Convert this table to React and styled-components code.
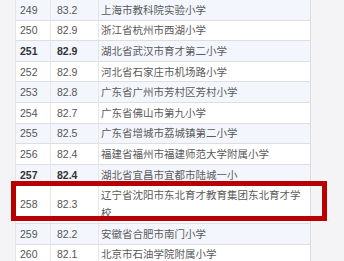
import styled, { createGlobalStyle } from 'styled-components'

const rows = [
  { rank: 249, score: '83.2', name: '上海市教科院实验小学' },
  { rank: 250, score: '82.9', name: '浙江省杭州市西湖小学' },
  { rank: 251, score: '82.9', name: '湖北省武汉市育才第二小学', bold: true },
  { rank: 252, score: '82.9', name: '河北省石家庄市机场路小学' },
  { rank: 253, score: '82.8', name: '广东省广州市芳村区芳村小学' },
  { rank: 254, score: '82.7', name: '广东省佛山市第九小学' },
  { rank: 255, score: '82.5', name: '广东省增城市荔城镇第二小学' },
  { rank: 256, score: '82.4', name: '福建省福州市福建师范大学附属小学' },
  { rank: 257, score: '82.4', name: '湖北省宜昌市宜都市陆城一小', bold: true },
  { rank: 258, score: '82.3', name: '辽宁省沈阳市东北育才教育集团东北育才学校' },
  { rank: 259, score: '82.2', name: '安徽省合肥市南门小学' },
  { rank: 260, score: '82.1', name: '北京市石油学院附属小学' },
]

function App() {
  return (
    <>
      <GlobalStyle />
      <Page>
        <Wrap>
          <Table>
            <colgroup>
              <col style={{ width: 35 }} />
              <col style={{ width: 48 }} />
              <col />
            </colgroup>
            <tbody>
              {rows.map((row) => (
                <Row key={row.rank} $odd={row.rank % 2 === 1}>
                  <Cell $pad={4} $bold={row.bold}>{row.rank}</Cell>
                  <Cell $pad={6} $bold={row.bold}>{row.score}</Cell>
                  <Cell $pad={2} $name>{row.name}</Cell>
                </Row>
              ))}
            </tbody>
          </Table>
          <Highlight />
        </Wrap>
      </Page>
    </>
  )
}

export default App

const GlobalStyle = createGlobalStyle`
  html, body {
    margin: 0;
    padding: 0;
    background: #f4f4f7;
  }
`

const Page = styled.div`
  width: 344px;
  height: 261px;
  overflow: hidden;
  background: #f4f4f7;
  padding-left: 15px;
  box-sizing: border-box;
`

const Wrap = styled.div`
  position: relative;
  width: 296px;
  margin-top: -1px;
`

const Table = styled.table`
  width: 296px;
  table-layout: fixed;
  border-collapse: collapse;
  border-right: 1px solid #dcdcdc;
  border-left: 1px solid #e4e4e4;
  font-family: Arial, 'Liberation Sans', 'Noto Sans CJK SC', sans-serif;
  font-size: 10.5px;
  color: #555555;
`

const Row = styled.tr`
  background: ${(p) => (p.$odd ? '#f3f7fd' : '#ffffff')};
  border-top: 1px solid #dedede;
`

const Cell = styled.td`
  padding: 0.8px 2px 0.8px ${(p) => p.$pad}px;
  line-height: 18px;
  vertical-align: middle;
  border-left: 1px solid #e6e6e6;
  font-weight: ${(p) => (p.$bold ? 'bold' : 'normal')};
  color: ${(p) => (p.$bold ? '#333333' : p.$name ? '#5a5a5a' : '#555555')};
  word-break: break-all;
`

const Highlight = styled.div`
  position: absolute;
  left: -4px;
  top: 182px;
  width: 316px;
  height: 40px;
  box-sizing: border-box;
  border: 5px solid #b80000;
  pointer-events: none;
`
